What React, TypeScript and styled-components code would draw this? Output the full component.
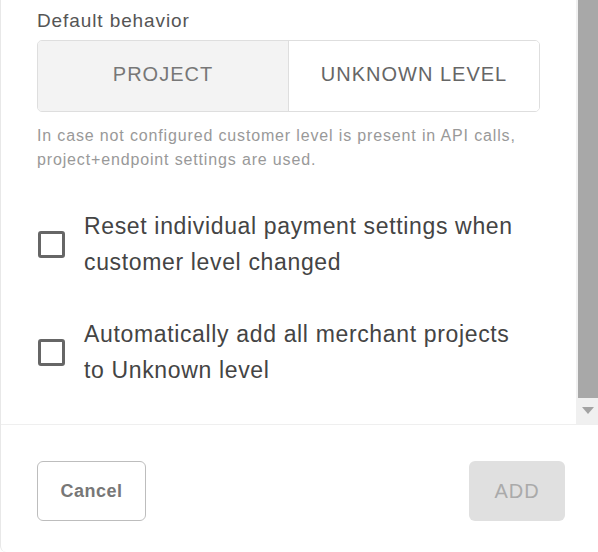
import React from "react";
import styled, { createGlobalStyle } from "styled-components";

const GlobalStyle = createGlobalStyle`
  html, body { margin: 0; padding: 0; background: #ffffff; }
  body { font-family: "Liberation Sans", Arial, sans-serif; }
  * { box-sizing: border-box; }
`;

const Dialog = styled.div`
  display: flex;
  flex-direction: column;
  width: 598px;
  height: 552px;
  border-left: 1px solid #e8e8e8;
  border-bottom-left-radius: 6px;
  overflow: hidden;
  background: #fff;
`;

const BodyArea = styled.div`
  display: flex;
  height: 425px;
  border-bottom: 1px solid #efefef;
`;

const Content = styled.div`
  flex: 1;
  padding: 10px 36px 0 36px;
  display: flex;
  flex-direction: column;
`;

const Label = styled.div`
  font-size: 19px;
  line-height: 22px;
  letter-spacing: 0.9px;
  color: #555;
  margin-bottom: 8px;
`;

const Toggle = styled.div`
  display: flex;
  height: 72px;
  border: 1px solid #dedede;
  border-radius: 5px;
  overflow: hidden;
`;

const Segment = styled.div<{ $active?: boolean }>`
  flex: 1;
  display: flex;
  align-items: center;
  justify-content: center;
  padding-bottom: 3px;
  font-size: 20px;
  letter-spacing: 1px;
  color: ${(p) => (p.$active ? "#777" : "#666")};
  background: ${(p) => (p.$active ? "#f3f3f3" : "#fff")};
  & + & {
    border-left: 1px solid #dedede;
  }
`;

const Help = styled.div`
  margin-top: 12px;
  font-size: 16px;
  line-height: 24px;
  letter-spacing: 0.85px;
  color: #999;
`;

const CheckRow = styled.label`
  display: flex;
  align-items: center;
  gap: 19px;
  margin-top: 36px;
  padding-left: 1px;
  padding-right: 16px;
`;

const Box = styled.span`
  flex: none;
  width: 27px;
  height: 27px;
  border: 3px solid #666;
  border-radius: 3px;
`;

const CheckText = styled.span`
  flex: 1;
  font-size: 23px;
  line-height: 36px;
  letter-spacing: 0.65px;
  color: #444;
`;

const Scrollbar = styled.div`
  width: 22px;
  display: flex;
  flex-direction: column;
  background: #f0f0f0;
  padding-left: 2px;
`;

const Thumb = styled.div`
  flex: 1;
  background: #a8a8a8;
`;

const Arrow = styled.div`
  height: 26px;
  display: flex;
  align-items: center;
  justify-content: center;
  padding-bottom: 2px;
`;

const Footer = styled.div`
  flex: 1;
  display: flex;
  justify-content: space-between;
  align-items: flex-start;
  padding: 36px 33px 0 36px;
`;

const CancelButton = styled.button`
  width: 109px;
  height: 60px;
  border: 1px solid #bdbdbd;
  border-radius: 6px;
  background: #fff;
  font-family: inherit;
  font-size: 18px;
  font-weight: bold;
  letter-spacing: 0.5px;
  color: #777;
`;

const AddButton = styled.button`
  width: 96px;
  height: 60px;
  border: none;
  border-radius: 6px;
  background: #e0e0e0;
  font-family: inherit;
  font-size: 20px;
  letter-spacing: 1px;
  color: #aaa;
`;

export default function App() {
  return (
    <>
      <GlobalStyle />
      <Dialog>
        <BodyArea>
          <Content>
            <Label>Default behavior</Label>
            <Toggle>
              <Segment $active>PROJECT</Segment>
              <Segment>UNKNOWN LEVEL</Segment>
            </Toggle>
            <Help>
              In case not configured customer level is present in API calls,
              <br />
              project+endpoint settings are used.
            </Help>
            <CheckRow>
              <Box />
              <CheckText>Reset individual payment settings when customer level changed</CheckText>
            </CheckRow>
            <CheckRow>
              <Box />
              <CheckText>Automatically add all merchant projects to Unknown level</CheckText>
            </CheckRow>
          </Content>
          <Scrollbar>
            <Thumb />
            <Arrow>
              <svg width="12" height="7" viewBox="0 0 12 7">
                <path d="M0 0 H12 L6 7 Z" fill="#a3a3a3" />
              </svg>
            </Arrow>
          </Scrollbar>
        </BodyArea>
        <Footer>
          <CancelButton>Cancel</CancelButton>
          <AddButton>ADD</AddButton>
        </Footer>
      </Dialog>
    </>
  );
}
